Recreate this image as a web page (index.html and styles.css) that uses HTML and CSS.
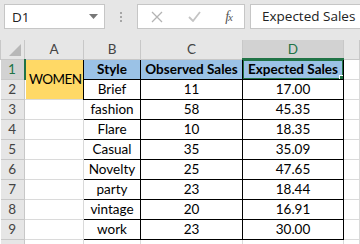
FILE: index.html
```html
<!DOCTYPE html>
<html lang="en">
<head>
    <meta charset="UTF-8">
    <title>Sheet</title>
    <link rel="stylesheet" href="styles.css">
</head>
<body>
    <div class="formula-bar">
        <div class="name-box">
            <span>D1</span>
            <svg class="drop" width="9" height="5" viewBox="0 0 9 5"><path d="M0 0h9L4.5 5z" fill="#777"/></svg>
        </div>
        <div class="grip">
            <i></i><i></i><i></i>
        </div>
        <div class="fx-box">
            <svg width="12" height="12" viewBox="0 0 12 12"><path d="M1 1l10 10M11 1L1 11" stroke="#b3b3b3" stroke-width="1.3"/></svg>
            <svg width="13" height="11" viewBox="0 0 13 11"><path d="M1 6l4 4L12 1" stroke="#c4c4c4" stroke-width="1.8" fill="none"/></svg>
            <span class="fx">f<small>x</small></span>
        </div>
        <div class="formula-text">Expected Sales</div>
    </div>

    <table class="sheet">
        <colgroup>
            <col class="c-row">
            <col class="c-a">
            <col class="c-b">
            <col class="c-c">
            <col class="c-d">
            <col>
        </colgroup>
        <tr class="col-heads">
            <th class="corner"><span class="tri"></span></th>
            <th>A</th>
            <th>B</th>
            <th>C</th>
            <th class="active">D</th>
            <th></th>
        </tr>
        <tr>
            <th class="row-head active">1</th>
            <td class="women" rowspan="2">WOMEN</td>
            <td class="box head">Style</td>
            <td class="box head">Observed Sales</td>
            <td class="box head selected">Expected Sales</td>
            <td></td>
        </tr>
        <tr>
            <th class="row-head">2</th>
            <td class="box">Brief</td>
            <td class="box">11</td>
            <td class="box">17.00</td>
            <td></td>
        </tr>
        <tr>
            <th class="row-head">3</th>
            <td></td>
            <td class="box">fashion</td>
            <td class="box">58</td>
            <td class="box">45.35</td>
            <td></td>
        </tr>
        <tr>
            <th class="row-head">4</th>
            <td></td>
            <td class="box">Flare</td>
            <td class="box">10</td>
            <td class="box">18.35</td>
            <td></td>
        </tr>
        <tr>
            <th class="row-head">5</th>
            <td></td>
            <td class="box">Casual</td>
            <td class="box">35</td>
            <td class="box">35.09</td>
            <td></td>
        </tr>
        <tr>
            <th class="row-head">6</th>
            <td></td>
            <td class="box">Novelty</td>
            <td class="box">25</td>
            <td class="box">47.65</td>
            <td></td>
        </tr>
        <tr>
            <th class="row-head">7</th>
            <td></td>
            <td class="box">party</td>
            <td class="box">23</td>
            <td class="box">18.44</td>
            <td></td>
        </tr>
        <tr>
            <th class="row-head">8</th>
            <td></td>
            <td class="box">vintage</td>
            <td class="box">20</td>
            <td class="box">16.91</td>
            <td></td>
        </tr>
        <tr>
            <th class="row-head">9</th>
            <td></td>
            <td class="box">work</td>
            <td class="box">23</td>
            <td class="box">30.00</td>
            <td></td>
        </tr>
        <tr class="last">
            <th class="row-head"></th>
            <td></td>
            <td></td>
            <td></td>
            <td></td>
            <td></td>
        </tr>
    </table>
</body>
</html>
```

FILE: styles.css
```css
* {
    margin: 0;
    padding: 0;
    box-sizing: border-box;
}

body {
    width: 360px;
    height: 244px;
    overflow: hidden;
    background-color: #ffffff;
    font-family: 'Open Sans', 'Noto Sans', sans-serif;
}

.formula-bar {
    height: 40px;
    background-color: #e6e6e6;
    display: flex;
    align-items: flex-start;
    padding-top: 4px;
    padding-left: 4px;
}

.name-box {
    width: 101px;
    height: 25px;
    background-color: #ffffff;
    border: 1px solid #c6c6c6;
    display: flex;
    align-items: center;
    justify-content: space-between;
    padding: 0 6px 0 7px;
    font-size: 13.5px;
    color: #222;
}

.grip {
    width: 32px;
    height: 25px;
    display: flex;
    flex-direction: column;
    align-items: center;
    justify-content: center;
    gap: 2px;
}

.grip i {
    width: 2px;
    height: 2px;
    background-color: #a6a6a6;
}

.fx-box {
    width: 108px;
    height: 25px;
    background-color: #ffffff;
    border: 1px solid #c6c6c6;
    display: flex;
    align-items: center;
    justify-content: space-between;
    padding: 0 12px 0 13px;
}

.fx {
    font-family: 'Liberation Serif', serif;
    font-style: italic;
    font-size: 14px;
    color: #555;
    letter-spacing: -1px;
}

.fx small {
    font-size: 11px;
}

.formula-text {
    flex: 1;
    height: 25px;
    margin-left: 5px;
    background-color: #ffffff;
    border: 1px solid #c6c6c6;
    border-right: none;
    padding-left: 11px;
    font-size: 13.5px;
    line-height: 23px;
    color: #222;
    white-space: nowrap;
}

.sheet {
    border-collapse: collapse;
    table-layout: fixed;
    width: 360px;
    font-family: Lato, 'Liberation Sans', sans-serif;
    font-size: 13.5px;
    color: #000;
}

.c-row { width: 24px; }
.c-a { width: 59px; }
.c-b { width: 57px; }
.c-c { width: 102px; }
.c-d { width: 101px; }

.sheet th,
.sheet td {
    height: 20px;
    padding: 0;
    border: 1px solid #dadada;
    white-space: nowrap;
    overflow: hidden;
    text-align: center;
    font-weight: normal;
}

.sheet .last th,
.sheet .last td {
    height: 8px;
}

.col-heads th {
    height: 19px;
    background-color: #e6e6e6;
    border-color: #c8c8c8;
    border-top: none;
    color: #444;
    font-size: 13.5px;
}

.col-heads th.active {
    background-color: #d2d2d2;
    border-bottom: 2px solid #217346;
    color: #217346;
}

.corner {
    position: relative;
}

.tri {
    position: absolute;
    right: 3px;
    bottom: 3px;
    width: 0;
    height: 0;
    border-left: 12px solid transparent;
    border-bottom: 12px solid #b8b8b8;
}

.row-head {
    background-color: #e6e6e6;
    border-color: #c8c8c8 !important;
    border-left: none !important;
    color: #444;
    font-size: 13.5px;
}

.row-head.active {
    background-color: #d2d2d2;
    border-right: 2px solid #217346 !important;
    color: #217346;
}

.women {
    background-color: #ffd966;
    border: none !important;
    vertical-align: middle;
    letter-spacing: -0.6px;
    padding-left: 2px !important;
}

.sheet td.box {
    border: 1px solid #000;
}

.sheet td.head {
    background-color: #9bc2e6;
    font-weight: bold;
}

.selected {
    position: relative;
}

.selected::after {
    content: '';
    position: absolute;
    left: -1px;
    top: -1px;
    right: -1px;
    bottom: -1px;
    border: 2px solid #217346;
}

.selected::before {
    content: '';
    position: absolute;
    right: -4px;
    bottom: -4px;
    width: 6px;
    height: 6px;
    background-color: #217346;
    border: 1px solid #ffffff;
    z-index: 1;
}
```
